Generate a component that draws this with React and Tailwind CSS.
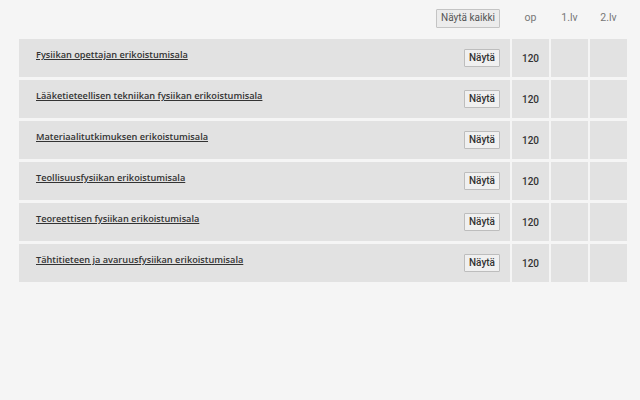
import React from "react";

const rows = [
  "Fysiikan opettajan erikoistumisala",
  "Lääketieteellisen tekniikan fysiikan erikoistumisala",
  "Materiaalitutkimuksen erikoistumisala",
  "Teollisuusfysiikan erikoistumisala",
  "Teoreettisen fysiikan erikoistumisala",
  "Tähtitieteen ja avaruusfysiikan erikoistumisala",
];

export default function App() {
  return (
    <div className="w-[640px] h-[400px] bg-[#f5f5f5] overflow-hidden" style={{ fontFamily: "Roboto, sans-serif" }}>
      <div className="flex items-center h-[36px] pl-[19px] pr-[13px]">
        <div className="flex-1 flex justify-end pr-[12px]">
          <button className="h-[19px] px-[4px] border border-[#c4c4c4] bg-[#ececec] text-[10px] text-[#555] leading-none rounded-[1px]">
            Näytä kaikki
          </button>
        </div>
        <div className="w-[37px] text-center text-[10.5px] text-[#777]">op</div>
        <div className="w-[2px]" />
        <div className="w-[37px] text-center text-[10.5px] text-[#777]">1.lv</div>
        <div className="w-[2px]" />
        <div className="w-[37px] text-center text-[10.5px] text-[#777]">2.lv</div>
      </div>
      <div className="flex flex-col gap-[3px] pt-[3px] pl-[19px] pr-[13px]">
        {rows.map((r) => (
          <div key={r} className="flex h-[38px] gap-[2px]">
            <div className="flex-1 bg-[#e2e2e2] flex items-center justify-between pl-[17px] pr-[10px]">
              <a
                href="#"
                className="text-[9.2px] font-semibold text-[#333] underline pb-[6px]"
                style={{ fontFamily: "'Open Sans', sans-serif" }}
              >
                {r}
              </a>
              <button className="h-[18px] w-[36px] border border-[#bdbdbd] bg-[#f0f0f0] text-[10px] font-medium text-[#333] leading-none rounded-[1px]">
                Näytä
              </button>
            </div>
            <div className="w-[37px] bg-[#e2e2e2] flex items-center justify-center text-[10px] font-medium text-[#333]">120</div>
            <div className="w-[37px] bg-[#e2e2e2]" />
            <div className="w-[37px] bg-[#e2e2e2]" />
          </div>
        ))}
      </div>
    </div>
  );
}
